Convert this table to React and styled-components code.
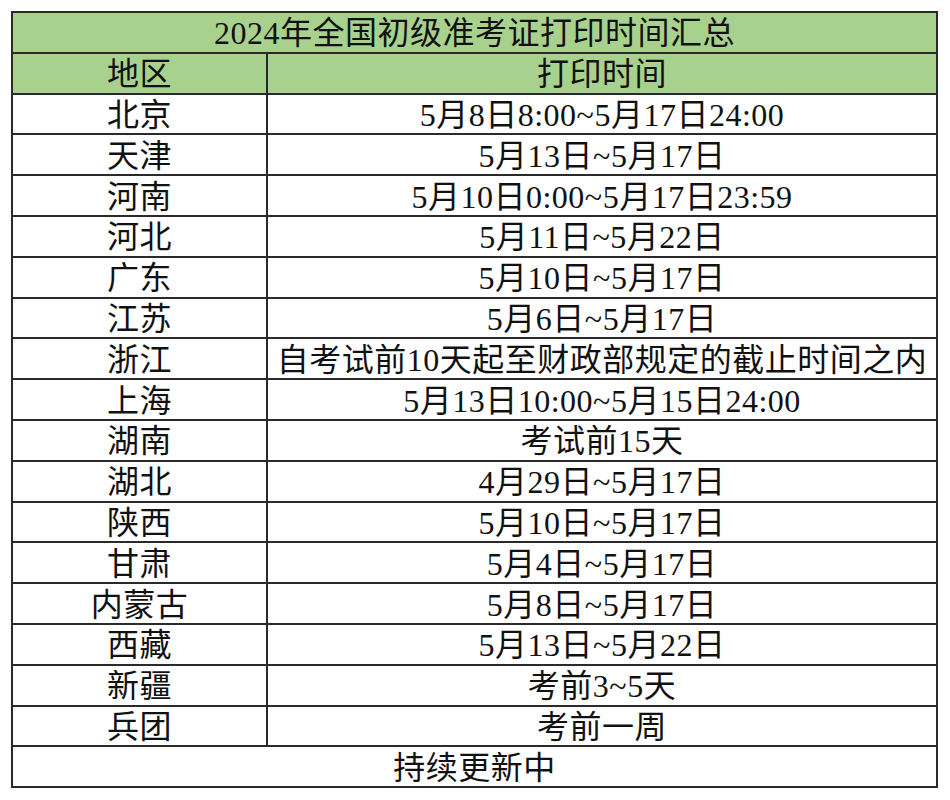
import React from "react";
import styled, { createGlobalStyle } from "styled-components";

const Global = createGlobalStyle`
  html, body { margin: 0; padding: 0; background: #ffffff; }
  body { font-family: "Liberation Serif", "Noto Sans CJK SC", serif; }
`;

const Page = styled.div`
  padding: 11px 0 0 11px;
  width: 950px;
  height: 800px;
  box-sizing: border-box;
`;

const Table = styled.table`
  border-collapse: collapse;
  width: 927px;
  table-layout: fixed;
  border: 2.5px solid #2a2a2a;
  color: #111;
  font-family: "Liberation Serif", "Noto Sans CJK SC", serif;
  font-size: 32px;
`;

const Cell = styled.td`
  border: 2px solid #2a2a2a;
  height: 36.8px;
  padding: 2px 0 0 0;
  text-align: center;
  vertical-align: middle;
  line-height: 36px;
  white-space: nowrap;
  letter-spacing: 0.5px;
  background: ${(p) => (p.$green ? "#a9d18e" : "#ffffff")};
`;

const rows = [
  ["北京", "5月8日8:00~5月17日24:00"],
  ["天津", "5月13日~5月17日"],
  ["河南", "5月10日0:00~5月17日23:59"],
  ["河北", "5月11日~5月22日"],
  ["广东", "5月10日~5月17日"],
  ["江苏", "5月6日~5月17日"],
  ["浙江", "自考试前10天起至财政部规定的截止时间之内"],
  ["上海", "5月13日10:00~5月15日24:00"],
  ["湖南", "考试前15天"],
  ["湖北", "4月29日~5月17日"],
  ["陕西", "5月10日~5月17日"],
  ["甘肃", "5月4日~5月17日"],
  ["内蒙古", "5月8日~5月17日"],
  ["西藏", "5月13日~5月22日"],
  ["新疆", "考前3~5天"],
  ["兵团", "考前一周"],
];

export default function App() {
  return (
    <Page>
      <Global />
      <Table>
        <colgroup>
          <col style={{ width: 255 }} />
          <col />
        </colgroup>
        <tbody>
          <tr>
            <Cell $green colSpan={2}>2024年全国初级准考证打印时间汇总</Cell>
          </tr>
          <tr>
            <Cell $green>地区</Cell>
            <Cell $green>打印时间</Cell>
          </tr>
          {rows.map(([a, b]) => (
            <tr key={a}>
              <Cell>{a}</Cell>
              <Cell>{b}</Cell>
            </tr>
          ))}
          <tr>
            <Cell colSpan={2}>持续更新中</Cell>
          </tr>
        </tbody>
      </Table>
    </Page>
  );
}
